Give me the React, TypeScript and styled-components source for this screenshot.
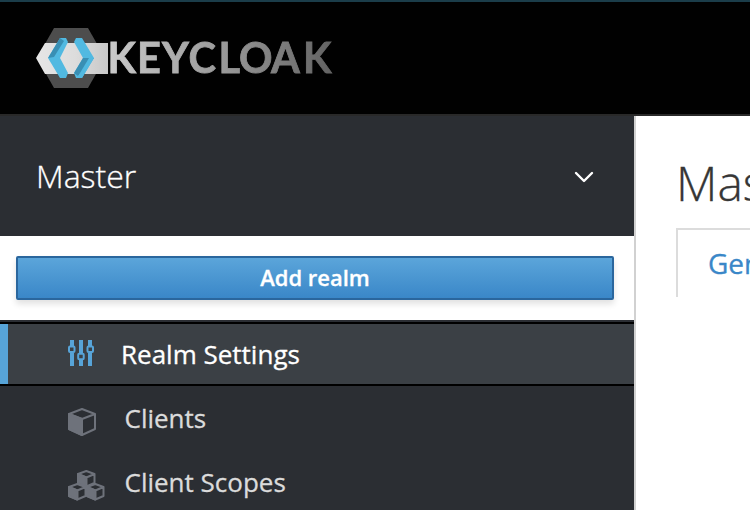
import React from "react";
import styled, { createGlobalStyle } from "styled-components";

const GlobalStyle = createGlobalStyle`
  *, *::before, *::after { box-sizing: border-box; }
  body {
    margin: 0;
    background: #fff;
    overflow: hidden;
    font-family: "Open Sans", sans-serif;
    -webkit-font-smoothing: antialiased;
  }
`;

const Page = styled.div`
  display: flex;
  flex-direction: column;
  width: 750px;
  height: 510px;
  overflow: hidden;
`;

const Header = styled.header`
  flex: none;
  height: 116px;
  padding: 26px 0 0 36px;
  background: #010101;
  border-top: 2px solid #1b3d4a;
  border-bottom: 2px solid #292929;
`;

const LogoSvg = styled.svg`
  display: block;
  filter: blur(0.6px);
`;

const Body = styled.div`
  flex: 1;
  display: flex;
  min-height: 0;
`;

const Sidebar = styled.aside`
  flex: none;
  width: 636px;
  display: flex;
  flex-direction: column;
  border-right: 2px solid #d1d1d1;
`;

const RealmSelector = styled.div`
  flex: none;
  height: 120px;
  padding: 2px 40px 0 36px;
  display: flex;
  align-items: center;
  justify-content: space-between;
  background: #2b2e33;
  color: #fff;
`;

const RealmName = styled.span`
  padding-bottom: 2px;
  font-size: 32px;
  font-weight: 300;
  line-height: 44px;
  -webkit-text-stroke: 0.3px currentColor;
`;

const ActionPanel = styled.div`
  flex: none;
  height: 84px;
  padding: 20px 20px 0 16px;
  background: #fff;
`;

const AddButton = styled.button`
  display: block;
  width: 100%;
  height: 44px;
  padding: 0 0 1px;
  border: 2px solid #2a669d;
  border-radius: 2px;
  background: linear-gradient(#5ba5da, #3a87c8);
  box-shadow: 0 4px 6px rgba(3, 3, 3, 0.12);
  color: #fff;
  font: 600 22px/37px "Open Sans", sans-serif;
  -webkit-text-stroke: 0.3px currentColor;
`;

const Nav = styled.nav`
  flex: 1;
  min-height: 0;
  padding-top: 2px;
  background: #2b2e33;
`;

const NavItem = styled.a<{ $active?: boolean }>`
  display: flex;
  align-items: center;
  height: 64px;
  padding-left: ${(p) => (p.$active ? "60px" : "68px")};
  color: ${(p) => (p.$active ? "#fff" : "#dbdbdb")};
  background: ${(p) => (p.$active ? "#3b4045" : "transparent")};
  border-style: solid;
  border-color: #000;
  border-width: ${(p) => (p.$active ? "2px 0" : "0")};
  font-size: 26px;
  line-height: 36px;
  -webkit-text-stroke: 0.3px currentColor;

  &::before {
    content: "";
    display: ${(p) => (p.$active ? "block" : "none")};
    width: 8px;
    height: 60px;
    margin-left: -60px;
    margin-right: 60px;
    background: #57a4d8;
  }
`;

const IconSlot = styled.span<{ $active?: boolean }>`
  display: flex;
  width: ${(p) => (p.$active ? "53px" : "56.5px")};
  color: ${(p) => (p.$active ? "#57a4d8" : "#6e727b")};
  padding-top: ${(p) => (p.$active ? "0" : "7px")};
  padding-bottom: ${(p) => (p.$active ? "2px" : "0")};
`;

const Main = styled.main`
  flex: 1;
  min-width: 0;
  padding-left: 40px;
  background: #fff;
  overflow: hidden;
`;

const Title = styled.h1`
  margin: 34px 0 12px;
  color: #363636;
  font-size: 48px;
  font-weight: 300;
  line-height: 66px;
  white-space: nowrap;
  -webkit-text-stroke: 0.3px currentColor;
`;

const Tabs = styled.div`
  display: flex;
  width: 600px;
`;

const Tab = styled.div`
  width: 300px;
  height: 69px;
  padding: 14px 0 0 30px;
  border: 2px solid #dcdcdc;
  border-bottom: 0;
  color: #3a87c8;
  font-size: 28px;
  line-height: 38px;
  -webkit-text-stroke: 0.3px currentColor;
`;

const LETTERS: [string, number][] = [
  ["K", 107.5], ["E", 137], ["Y", 162], ["C", 188.5],
  ["L", 218.5], ["O", 239], ["A", 271], ["K", 303],
];

const Logo = () => (
  <LogoSvg width="304" height="60" viewBox="36 28 304 60" aria-label="Keycloak">
    <defs>
      <linearGradient id="word" gradientUnits="userSpaceOnUse" x1="110" y1="0" x2="332" y2="0">
        <stop offset="0" stopColor="#c9c9c9" />
        <stop offset="0.5" stopColor="#9a9a9a" />
        <stop offset="1" stopColor="#636363" />
      </linearGradient>
      <linearGradient id="band" x1="0" x2="1" y1="0" y2="0">
        <stop offset="0" stopColor="#e6e6e6" />
        <stop offset="0.55" stopColor="#dcdcdc" />
        <stop offset="1" stopColor="#c8c8c8" />
      </linearGradient>
    </defs>
    <path d="M54 28H88L105 58 88 88H54L37 58Z" fill="#4d4d4d" />
    <path d="M45 43H108V74H45L36 58Z" fill="url(#band)" />
    <path d="M60 38H66L68 42 60 58 68 73 66 78H60L48 58Z" fill="#51b9e1" />
    <path d="M60 38L48 58 54 57 64 41Z" fill="#398fb4" />
    <path d="M76 38H82L94 58 82 78H76L74 73 83 58 74 42Z" fill="#51b9e1" />
    <path d="M83 58H94L78 76 74 73Z" fill="#398fb4" />
    <path d="M94 58L82 78H77L89 58Z" fill="#51b9e1" />
    <text
      y="73"
      fontFamily="Lato, sans-serif"
      fontWeight="700"
      fontSize="41.5"
      fill="url(#word)"
      stroke="url(#word)"
      strokeWidth="0.8"
      x={LETTERS.map((l) => l[1]).join(" ")}
    >
      {LETTERS.map((l) => l[0]).join("")}
    </text>
  </LogoSvg>
);

const Chevron = () => (
  <svg width="20" height="12" viewBox="0 0 20 12" fill="none" stroke="currentColor" strokeWidth="2.4" strokeLinecap="round" strokeLinejoin="round">
    <path d="M2 2L10 10 18 2" />
  </svg>
);

const SlidersIcon = () => (
  <svg width="26" height="26" viewBox="0 0 26 26" fill="none" stroke="currentColor">
    <path d="M4 0V6M4 13V26M13 0V13M13 20V26M22 0V6M22 13V26" strokeWidth="4" />
    <rect x="1" y="6.5" width="5.5" height="5.5" rx="1" strokeWidth="2" />
    <rect x="10.2" y="13.8" width="5.5" height="5.5" rx="1" strokeWidth="2" />
    <rect x="19.5" y="6.5" width="5.5" height="5.5" rx="1" strokeWidth="2" />
  </svg>
);

const CubeIcon = () => (
  <svg width="28" height="28" viewBox="0 0 28 28" fill="none" stroke="currentColor" strokeWidth="2" strokeLinejoin="round">
    <path d="M14 1L27 6V21L14 27 1 21V6ZM1 6L14 11 27 6M14 11V27" />
    <path d="M1 6L14 11V27L1 21Z" fill="currentColor" />
  </svg>
);

const SMALL_CUBES = ["translate(9 0)", "translate(0 13)", "translate(18 13)"];

const CubesIcon = () => (
  <svg width="37" height="31" viewBox="0 0 37 31" fill="none" stroke="currentColor" strokeWidth="2" strokeLinejoin="round">
    {SMALL_CUBES.map((t) => (
      <g key={t} transform={t}>
        <path d="M9.3 1L17.5 4V13L9.3 16.5 1 13V4ZM1 4L9.3 7.5 17.5 4M9.3 7.5V16.5" />
        <path d="M1 4L9.3 7.5V16.5L1 13Z" fill="currentColor" />
      </g>
    ))}
  </svg>
);

const ITEMS = [
  { label: "Realm Settings", Icon: SlidersIcon, active: true },
  { label: "Clients", Icon: CubeIcon, active: false },
  { label: "Client Scopes", Icon: CubesIcon, active: false },
];

export default function App() {
  return (
    <Page>
      <GlobalStyle />
      <Header>
        <Logo />
      </Header>
      <Body>
        <Sidebar>
          <RealmSelector>
            <RealmName>Master</RealmName>
            <Chevron />
          </RealmSelector>
          <ActionPanel>
            <AddButton>Add realm</AddButton>
          </ActionPanel>
          <Nav>
            {ITEMS.map(({ label, Icon, active }) => (
              <NavItem key={label} $active={active}>
                <IconSlot $active={active}>
                  <Icon />
                </IconSlot>
                <span>{label}</span>
              </NavItem>
            ))}
          </Nav>
        </Sidebar>
        <Main>
          <Title>Master</Title>
          <Tabs>
            <Tab>General</Tab>
          </Tabs>
        </Main>
      </Body>
    </Page>
  );
}
